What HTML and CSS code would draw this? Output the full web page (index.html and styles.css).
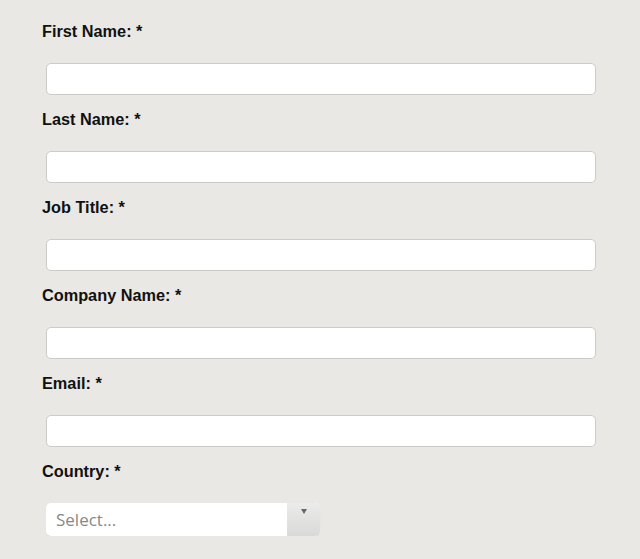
FILE: index.html
```html
<!DOCTYPE html>
<html lang="en">
<head>
  <meta charset="UTF-8" />
  <meta name="viewport" content="width=device-width, initial-scale=1.0" />
  <title>Registration</title>
  <link rel="stylesheet" href="styles.css">
</head>
<body>
  <form class="reg-form">
    <label for="first">First Name: *</label>
    <input id="first" type="text" />

    <label for="last">Last Name: *</label>
    <input id="last" type="text" />

    <label for="job">Job Title: *</label>
    <input id="job" type="text" />

    <label for="company">Company Name: *</label>
    <input id="company" type="text" />

    <label for="email">Email: *</label>
    <input id="email" type="email" />

    <label>Country: *</label>
    <div class="chosen">
      <span class="chosen-text">Select...</span>
      <span class="chosen-btn"><span class="arrow"></span></span>
    </div>
  </form>
</body>
</html>
```

FILE: styles.css
```css
html, body {
  margin: 0;
  background-color: #e9e8e4;
}
.reg-form {
  padding: 22px 44px 0 42px;
  font-family: 'Liberation Sans', Arial, sans-serif;
}
label {
  display: block;
  font-weight: bold;
  font-size: 16.3px;
  line-height: 18px;
  color: #111;
}
input {
  display: block;
  box-sizing: border-box;
  width: calc(100% - 4px);
  height: 32px;
  margin: 23px 0 15px 4px;
  padding: 4px 8px;
  font-size: 15px;
  background: #fff;
  border: 1px solid #cbcbc8;
  border-radius: 5px;
}
.chosen {
  display: flex;
  width: 274px;
  height: 33px;
  margin: 23px 0 0 4px;
  border-radius: 5px;
  background: #fff;
  overflow: hidden;
  box-shadow: 0 1px 1px rgba(0, 0, 0, 0.06);
}
.chosen-text {
  flex: 1;
  padding-left: 10px;
  font-family: 'Open Sans', sans-serif;
  font-size: 17px;
  line-height: 34px;
  color: #888;
}
.chosen-btn {
  width: 33px;
  background: linear-gradient(#ebebea, #d9d9d8);
  display: flex;
  justify-content: center;
}
.arrow {
  margin-top: 6px;
  width: 0;
  height: 0;
  border-left: 3px solid transparent;
  border-right: 3px solid transparent;
  border-top: 5px solid #666;
}
```
